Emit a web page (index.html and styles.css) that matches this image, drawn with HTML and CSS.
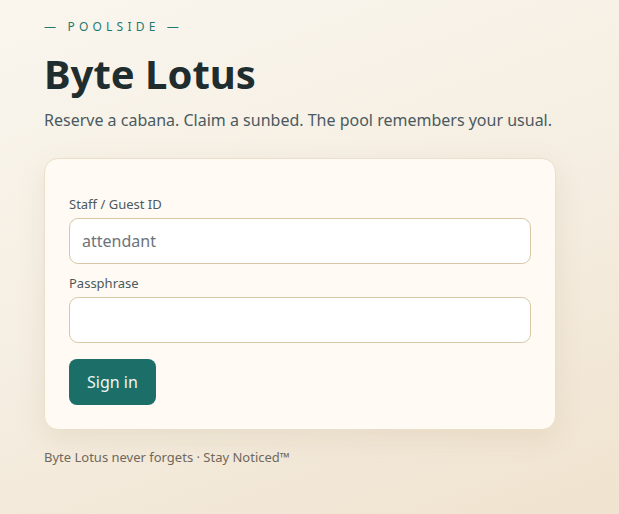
FILE: index.html
```html
<!DOCTYPE html>
<html lang="en">
<head>
    <meta charset="UTF-8">
    <meta name="viewport" content="width=device-width, initial-scale=1.0">
    <title>Byte Lotus — Sign in</title>
    <link rel="stylesheet" href="styles.css">
</head>
<body>
    <div class="page">
        <p class="eyebrow">— POOLSIDE —</p>
        <h1 class="title">Byte Lotus</h1>
        <p class="lede">Reserve a cabana. Claim a sunbed. The pool remembers your usual.</p>

        <form class="card">
            <label class="field-label" for="guest-id">Staff / Guest ID</label>
            <input class="field" id="guest-id" type="text" placeholder="attendant">

            <label class="field-label" for="pass">Passphrase</label>
            <input class="field" id="pass" type="password">

            <button class="btn" type="submit">Sign in</button>
        </form>

        <p class="footnote">Byte Lotus never forgets · Stay Noticed™</p>
    </div>
</body>
</html>
```

FILE: styles.css
```css
* {
    margin: 0;
    padding: 0;
    box-sizing: border-box;
}

body {
    font-family: "Noto Sans", "Open Sans", sans-serif;
    background: linear-gradient(160deg, #faf6ee 0%, #f5eee2 50%, #f0e3cf 100%);
    min-height: 100vh;
    color: #1f2d2f;
}

.page {
    width: 512px;
    margin-left: 44px;
    padding-top: 19px;
}

.eyebrow {
    font-size: 12px;
    letter-spacing: 4.2px;
    color: #1f7a73;
    line-height: 16px;
}

.title {
    font-size: 40px;
    font-weight: 700;
    line-height: 50px;
    margin-top: 14px;
    color: #1f2d2f;
}

.lede {
    font-size: 16px;
    line-height: 22px;
    color: #4b5a60;
    margin-top: 10px;
}

.card {
    display: flex;
    flex-direction: column;
    align-items: flex-start;
    margin-top: 27px;
    padding: 36px 24px 24px;
    background: #fffaf3;
    border: 1px solid #ebdfc9;
    border-radius: 14px;
    box-shadow: 0 8px 28px rgba(150, 120, 70, 0.12);
}

.field-label {
    font-size: 13px;
    line-height: 18px;
    color: #4b5a60;
    margin-bottom: 5px;
}

.field {
    width: 100%;
    height: 46px;
    padding: 0 12px;
    font-family: inherit;
    font-size: 16px;
    color: #1f2d2f;
    background: #fff;
    border: 1px solid #d8c8a8;
    border-radius: 9px;
    margin-bottom: 10px;
    outline: none;
}

.field::placeholder {
    color: #6b747a;
}

.btn {
    margin-top: 6px;
    height: 46px;
    padding: 0 18px;
    font-family: inherit;
    font-size: 16px;
    color: #eef7f5;
    background: #1b6f68;
    border: none;
    border-radius: 8px;
}

.footnote {
    margin-top: 18px;
    font-size: 13px;
    color: #70685c;
}
```
